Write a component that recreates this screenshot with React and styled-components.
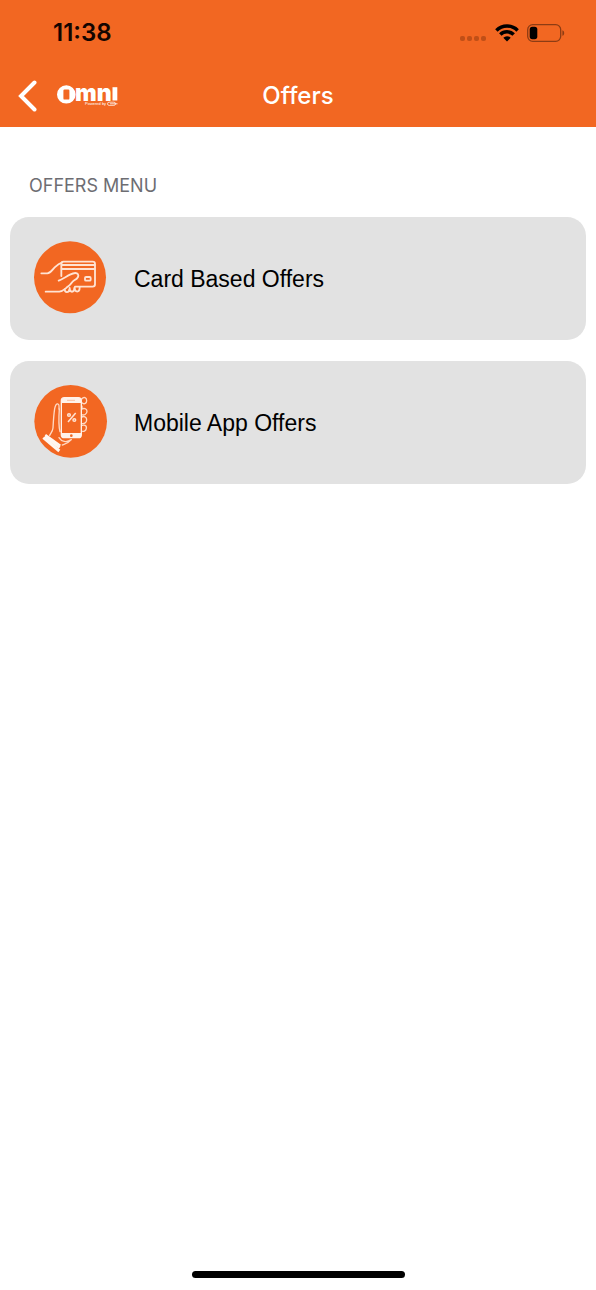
// src/App.jsx
import React from "react";
import styled, { createGlobalStyle } from "styled-components";

const GlobalStyle = createGlobalStyle`
  * { box-sizing: border-box; }
  body {
    margin: 0;
    background-color: #fff;
    font-family: Inter, "Liberation Sans", sans-serif;
  }
`;

const Screen = styled.div`
  min-height: 100vh;
  display: flex;
  flex-direction: column;
`;

const Header = styled.header`
  background-color: #f26722;
`;

const StatusBar = styled.div`
  height: 64px;
  padding: 2px 31px 0 53px;
  display: flex;
  align-items: center;
  justify-content: space-between;
`;

const Time = styled.span`
  font-size: 24px;
  font-weight: 600;
  line-height: 28px;
  color: #140500;
`;

const StatusIcons = styled.div`
  display: flex;
  align-items: center;
  gap: 8px;
  svg { display: block; }
`;

const NavBar = styled.nav`
  height: 63px;
  padding: 0 18px;
  display: grid;
  grid-template-columns: 1fr auto 1fr;
  align-items: center;
`;

const BackButton = styled.button`
  display: flex;
  align-items: center;
  gap: 20px;
  justify-self: start;
  padding: 0;
  border: none;
  background: none;
  cursor: pointer;
  svg { display: block; }
`;

const Title = styled.h1`
  margin: 0;
  font-size: 24px;
  font-weight: 500;
  line-height: 30px;
  color: #fff;
`;

const Main = styled.main`
  flex: 1;
  padding: 47px 10px 0;
`;

const SectionTitle = styled.h2`
  margin: 0 0 19px;
  padding: 0 19px;
  font-size: 18px;
  font-weight: 400;
  line-height: 24px;
  color: #6d6d72;
`;

const OfferList = styled.div`
  display: flex;
  flex-direction: column;
  gap: 21px;
`;

const OfferButton = styled.button`
  width: 100%;
  min-height: 123px;
  padding: 0 24px;
  display: flex;
  align-items: center;
  gap: 24px;
  border: none;
  border-radius: 19px;
  background-color: #e2e2e2;
  font-family: "Liberation Sans", Arial, sans-serif;
  font-size: 23px;
  line-height: 28px;
  color: #000;
  text-align: left;
  cursor: pointer;
  svg { flex: none; }
`;

const Footer = styled.footer`
  padding: 12px 0;
  display: flex;
  justify-content: center;
`;

const HomeIndicator = styled.div`
  width: 213px;
  height: 7px;
  border-radius: 4px;
  background-color: #000;
`;

const SignalDots = () => (
  <svg width="27" height="20" viewBox="0 0 27 20" fill="#c04f17" aria-hidden="true">
    <rect x="0" y="13" width="5" height="5" rx="2" />
    <rect x="7" y="13" width="5" height="5" rx="2" />
    <rect x="14" y="13" width="5" height="5" rx="2" />
    <rect x="21" y="13" width="5" height="5" rx="2" />
  </svg>
);

const WifiIcon = () => (
  <svg width="24" height="18" viewBox="0 0 24 18" aria-hidden="true">
    <g fill="none" stroke="#000" strokeWidth="3.5">
      <path d="M1.4 6.4a15 15 0 0 1 21.2 0" />
      <path d="M5.3 10.6a9.5 9.5 0 0 1 13.4 0" />
    </g>
    <path d="M12 17.4 8.3 13.7a5.3 5.3 0 0 1 7.4 0z" fill="#000" />
  </svg>
);

const BatteryIcon = () => (
  <svg width="38" height="18" viewBox="0 0 38 18" aria-hidden="true">
    <rect x="0.7" y="0.7" width="33" height="16.6" rx="5" fill="none" stroke="#8d3c14" strokeWidth="1.3" />
    <rect x="2.7" y="2.8" width="7.6" height="12.4" rx="2.6" fill="#000" />
    <path d="M35.4 6.2c2.4.8 2.4 4.8 0 5.6z" fill="#8d3c14" />
  </svg>
);

const ChevronIcon = () => (
  <svg width="19" height="32" viewBox="0 0 19 32" aria-hidden="true">
    <path d="M16.5 2.5 3 16l13.5 13.5" fill="none" stroke="#fff" strokeWidth="4" strokeLinecap="round" strokeLinejoin="miter" />
  </svg>
);

const OmniLogo = () => (
  <svg width="64" height="40" viewBox="0 -6 64 40" fill="#fff" role="img" aria-label="Omni">
    <path
      fillRule="evenodd"
      d="M9.3 3.2a9.3 9.2 0 1 1 0 18.4a9.3 9.2 0 1 1 0-18.4zM7.6 7.4a1.2 1.2 0 0 0-1.2 1.2v7.8a1.2 1.2 0 0 0 1.2 1.2h3.6a1.2 1.2 0 0 0 1.2-1.2V8.6a1.2 1.2 0 0 0-1.2-1.2z"
    />
    <text x="18" y="18.5" fontFamily="Inter, sans-serif" fontSize="23" fontWeight="900">mn</text>
    <rect x="55.5" y="5.2" width="4.8" height="13.3" />
    <text x="28" y="23" fontFamily="Liberation Sans, sans-serif" fontSize="4" fontWeight="400">Powered by</text>
    <rect x="50.5" y="20.2" width="8" height="3.2" rx="1.6" fill="none" stroke="#fff" strokeWidth="0.7" />
    <path d="M53 21.8h7.5" stroke="#fff" strokeWidth="0.8" />
  </svg>
);

const CardOfferIcon = () => (
  <svg width="76" height="76" viewBox="27 33 228 228" aria-hidden="true">
    <circle cx="135" cy="142" r="108" fill="#f26722" />
    <g fill="none" stroke="#ffe3d3" strokeWidth="5.5" strokeLinecap="round" strokeLinejoin="round">
      <path d="M49 130h18c10-1 14-10 22-18 8-8 16-13 23-15" />
      <path d="M109 138V101q0-6 6-6h88q7 0 7 7v61q0 7-7 7h-53" />
      <path d="M110 105h99M110 117h99" />
      <path d="M101 152c12-5 22-12 34-18 10-5 20-7 24-1 4 7-3 13-11 18-8 5-10 12-18 18-11 8-16 15-27 16H62" />
      <rect x="180" y="141" width="17" height="11" rx="3" />
      <path d="M119 178c0 11 13 11 14 0M134 174c0 15 14 15 14 0M149 172c0 17 15 17 15 0" />
    </g>
  </svg>
);

const MobileOfferIcon = () => (
  <svg width="76" height="76" viewBox="27 28 228 228" aria-hidden="true">
    <circle cx="137" cy="137" r="109" fill="#f26722" />
    <g fill="none" stroke="#ffd9c4" strokeWidth="4" strokeLinecap="round" strokeLinejoin="round">
      <path d="M74 179c4-8 9-12 10-22 1-18 2-39 5-58 2-11 5-15 10-14 5 2 3 8 3 15" />
      <path d="M103 100c-2 28-3 49 2 68M102 186c7 12 22 16 37 6M139 192c-8 10-16 12-27 16" />
      <path d="M170 70c7-8 15-4 15 5 0 8-7 12-13 7" />
      <path d="M169 101c7-5 17-2 17 6 0 9-9 13-17 10" />
      <path d="M169 125c7-5 17-2 16 8 0 9-9 13-16 10" />
      <path d="M169 150c7-4 17-1 15 8-1 8-9 11-15 8" />
      <path d="M169 90c3 2 3 6 0 10" />
    </g>
    <rect x="109" y="66" width="60" height="120" rx="9" fill="#f26722" stroke="#fff2ea" strokeWidth="4" />
    <path d="M109 82v-7q0-9 9-9h42q9 0 9 9v7zM109 172h60v6q0 9-9 9h-42q-9 0-9-9z" fill="#fff2ea" />
    <path d="M126 74h24" stroke="#f9b794" strokeWidth="2.5" />
    <circle cx="139" cy="180" r="4" fill="#f26722" />
    <g fill="none" stroke="#ffe3d3" strokeWidth="4.5">
      <path d="m152 112-23 27" />
      <circle cx="132" cy="118" r="4" />
      <circle cx="148" cy="133" r="4" />
    </g>
    <g stroke="#fff6f0" strokeLinecap="butt">
      <path d="m61 178 45 32" strokeWidth="7" />
      <path d="m55 186 48 40" strokeWidth="9" />
      <path d="m60 182 44 34" strokeWidth="8" />
    </g>
  </svg>
);

const offers = [
  { id: "card", label: "Card Based Offers", Icon: CardOfferIcon },
  { id: "mobile", label: "Mobile App Offers", Icon: MobileOfferIcon },
];

const App = () => {
  return (
    <Screen>
      <GlobalStyle />
      <Header>
        <StatusBar>
          <Time>11:38</Time>
          <StatusIcons>
            <SignalDots />
            <WifiIcon />
            <BatteryIcon />
          </StatusIcons>
        </StatusBar>
        <NavBar>
          <BackButton type="button" aria-label="Back">
            <ChevronIcon />
            <OmniLogo />
          </BackButton>
          <Title>Offers</Title>
        </NavBar>
      </Header>

      <Main>
        <SectionTitle>OFFERS MENU</SectionTitle>
        <OfferList>
          {offers.map(({ id, label, Icon }) => (
            <OfferButton key={id} type="button">
              <Icon />
              <span>{label}</span>
            </OfferButton>
          ))}
        </OfferList>
      </Main>

      <Footer>
        <HomeIndicator />
      </Footer>
    </Screen>
  );
};

export default App;
